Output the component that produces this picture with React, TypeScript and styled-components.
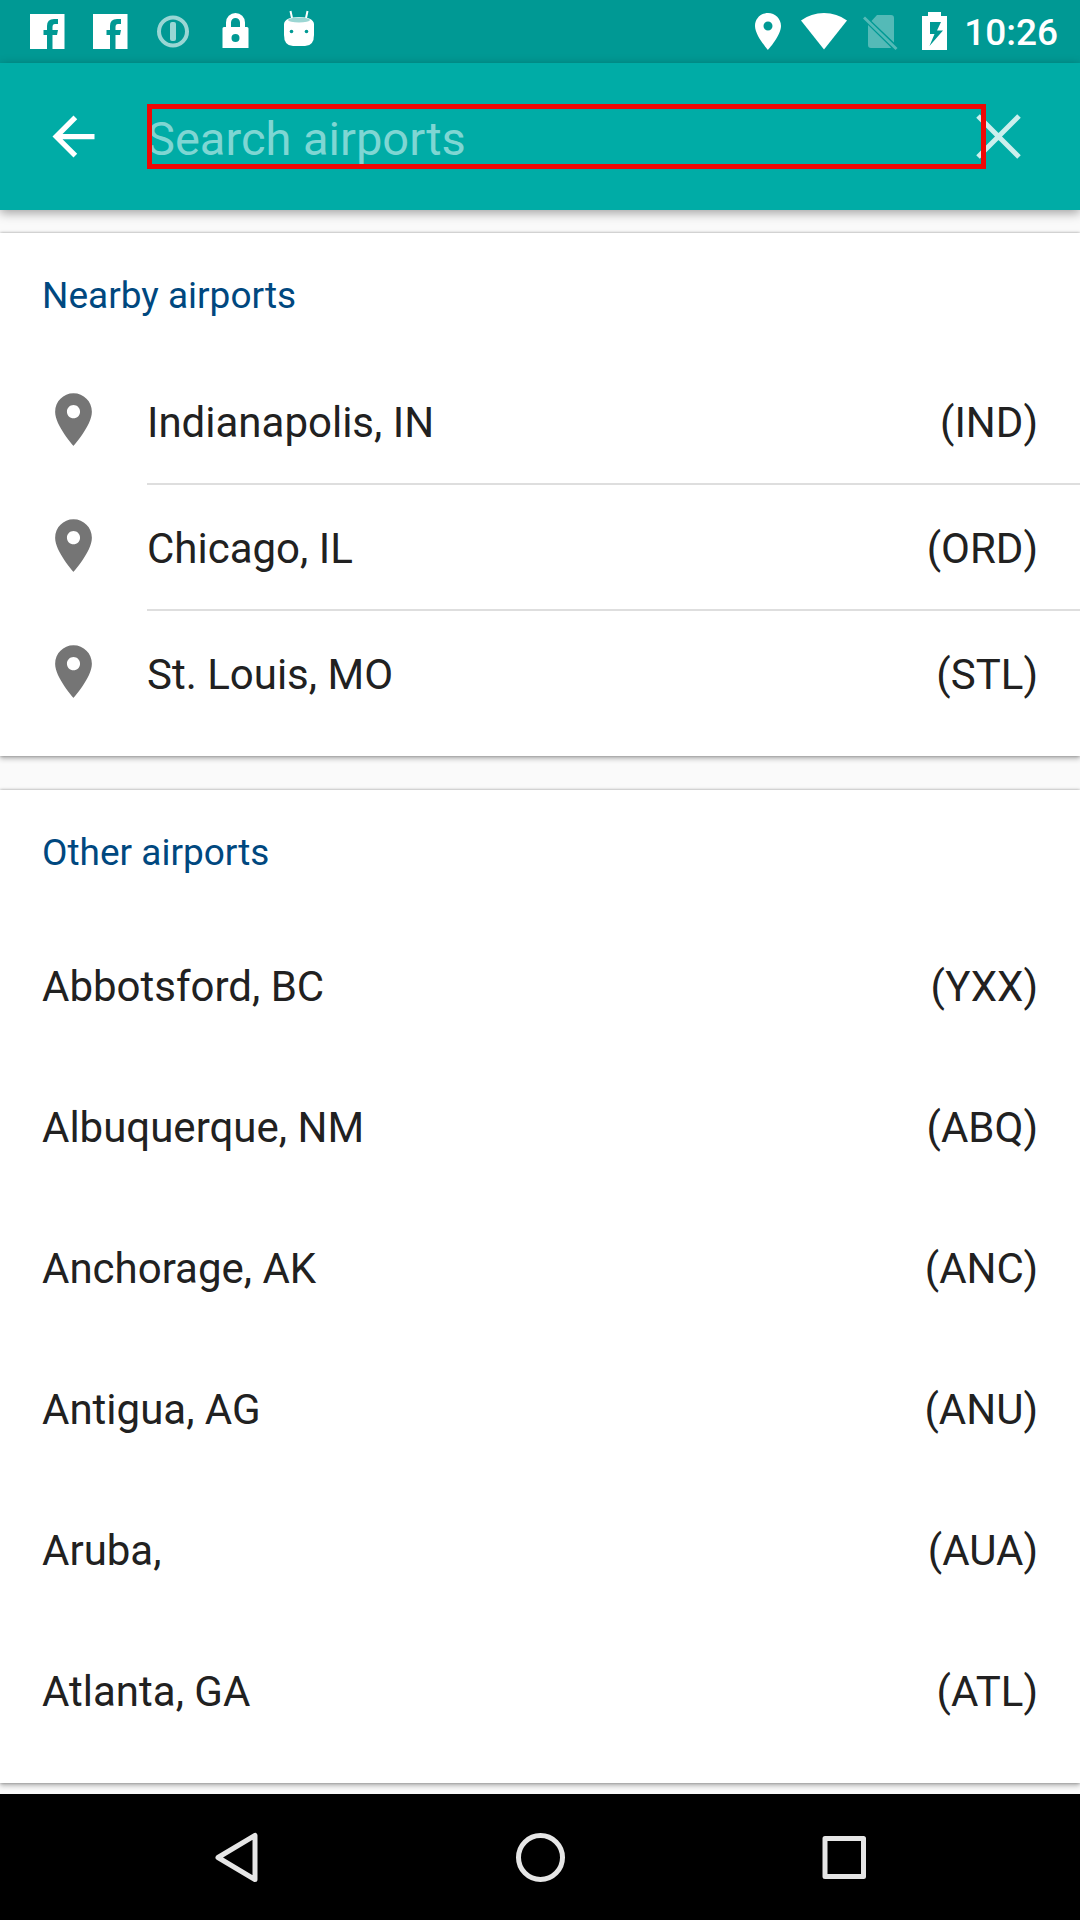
import React from "react";
import styled, { createGlobalStyle } from "styled-components";

const GlobalStyle = createGlobalStyle`
  * { box-sizing: border-box; }
  body { margin: 0; background: #fafafa; }
  body, button, input { font-family: Roboto, "Noto Sans", sans-serif; }
`;

const Screen = styled.div`
  display: flex;
  flex-direction: column;
  min-height: 100vh;
  color: #212121;
`;

const StatusBar = styled.div`
  display: flex;
  align-items: center;
  justify-content: space-between;
  height: 63px;
  padding: 0 22px 0 26px;
  background: #009994;
`;

const StatusGroup = styled.div<{ $gap: number }>`
  display: flex;
  align-items: center;
  gap: ${(p) => p.$gap}px;
`;

const StatusIcon = styled.svg`
  display: block;
  width: 42px;
  height: 63px;
  fill: #fff;
`;

const Clock = styled.time`
  margin-left: -7px;
  padding-top: 3px;
  color: #fff;
  font-size: 37px;
  font-weight: 500;
  line-height: 44px;
`;

const Toolbar = styled.header`
  position: relative;
  z-index: 1;
  display: flex;
  align-items: center;
  height: 147px;
  padding: 0 50px 0 42px;
  background: #00aca6;
  box-shadow: 0 3px 10px rgba(0, 0, 0, 0.36);
`;

const IconButton = styled.button`
  flex: none;
  display: block;
  padding: 0;
  border: 0;
  background: none;
  cursor: pointer;
`;

const CloseButton = styled(IconButton)`
  margin-left: -19px;
`;

const ActionIcon = styled.svg`
  display: block;
  width: 63px;
  height: 63px;
`;

const SearchInput = styled.input`
  position: relative;
  z-index: 1;
  flex: 1;
  min-width: 0;
  height: 65px;
  margin-left: 42px;
  padding: 3px 0 0;
  border: 0;
  outline: 5px solid #ee0805;
  outline-offset: -5px;
  background: none;
  color: #fff;
  font-size: 47px;
  &::placeholder {
    color: #7fd6d3;
    opacity: 1;
  }
`;

const Content = styled.main`
  flex: 1;
  display: flex;
  flex-direction: column;
  gap: 34px;
  padding: 23px 0 11px;
`;

const Card = styled.section<{ $bottom: number }>`
  padding-bottom: ${(p) => p.$bottom}px;
  background: #fff;
  box-shadow: 0 3px 5px rgba(0, 0, 0, 0.24), 0 0 3px rgba(0, 0, 0, 0.36);
`;

const CardTitle = styled.h2`
  margin: 0;
  padding: 0 42px;
  color: #00487f;
  font-size: 37px;
  font-weight: 400;
  line-height: 126px;
`;

const List = styled.ul`
  margin: 0;
  padding: 0;
  list-style: none;
`;

const Row = styled.li<{ $height: number }>`
  display: flex;
  align-items: center;
  height: ${(p) => p.$height}px;
  padding-left: 42px;
`;

const RowBody = styled.div<{ $divided?: boolean; $top?: number }>`
  flex: 1;
  align-self: stretch;
  display: flex;
  align-items: center;
  justify-content: space-between;
  padding: ${(p) => p.$top ?? 0}px 42px 0 0;
  box-shadow: ${(p) => (p.$divided ? "inset 0 -2px #dedede" : "none")};
  font-size: 42px;
  line-height: 50px;
`;

const PinIcon = styled.svg`
  flex: none;
  width: 63px;
  height: 63px;
  margin: 0 42px 5px 0;
  fill: #757575;
`;

const NavBar = styled.nav`
  display: flex;
  align-items: center;
  justify-content: center;
  gap: 178px;
  height: 126px;
  background: #000;
`;

const NavIcon = styled.svg`
  display: block;
  width: 126px;
  height: 126px;
  fill: none;
  stroke: #e6e6e6;
  stroke-width: 5;
  stroke-linejoin: round;
`;

const PIN =
  "M12 2C8.13 2 5 5.13 5 9c0 5.25 7 13 7 13s7-7.75 7-13c0-3.87-3.13-7-7-7zm0 9.5c-1.38 0-2.5-1.12-2.5-2.5s1.12-2.5 2.5-2.5 2.5 1.12 2.5 2.5-1.12 2.5-2.5 2.5z";

const nearby = [
  { city: "Indianapolis, IN", code: "IND" },
  { city: "Chicago, IL", code: "ORD" },
  { city: "St. Louis, MO", code: "STL" },
];

const others = [
  { city: "Abbotsford, BC", code: "YXX" },
  { city: "Albuquerque, NM", code: "ABQ" },
  { city: "Anchorage, AK", code: "ANC" },
  { city: "Antigua, AG", code: "ANU" },
  { city: "Aruba,", code: "AUA" },
  { city: "Atlanta, GA", code: "ATL" },
];

function FacebookIcon() {
  return (
    <StatusIcon viewBox="0 0 42 63" aria-hidden="true">
      <path d="M4 14H38.500V49H26.500V35H31L32 30H26.500V27Q26.500 24 29 24H32V19H28Q21 19 21 26V30H17.500V35H21V49H4Z" />
    </StatusIcon>
  );
}

export default function App() {
  return (
    <Screen>
      <GlobalStyle />
      <StatusBar>
        <StatusGroup $gap={21}>
          <FacebookIcon />
          <FacebookIcon />
          <StatusIcon viewBox="0 0 42 63" opacity="0.6" aria-hidden="true">
            <circle cx="21" cy="31.5" r="14" fill="none" stroke="#fff" strokeWidth="4" />
            <rect x="18" y="22" width="6" height="19" rx="2" />
          </StatusIcon>
          <StatusIcon viewBox="0 0 42 63" aria-hidden="true">
            <path d="M13.500 29V22.500a7 7 0 0 1 14 0V29" fill="none" stroke="#fff" strokeWidth="5" />
            <path
              fillRule="evenodd"
              d="M9 27H32Q33.500 27 33.500 28.500V48H7.500V28.500Q7.500 27 9 27ZM20.500 34a4 4 0 1 0 0 8a4 4 0 1 0 0-8Z"
            />
          </StatusIcon>
          <StatusIcon viewBox="0 0 42 63" aria-hidden="true">
            <path d="M12.500 11L14 18M29.500 11L28 18" stroke="#fff" strokeWidth="2" />
            <path d="M6 24Q7 17 21 17T36 24V35Q36 46 27 46H15Q6 46 6 35Z" />
            <ellipse cx="21" cy="20" rx="11" ry="2.500" fill="#9bd6d3" />
            <circle cx="13.500" cy="31.500" r="1.800" fill="#009994" />
            <circle cx="28.500" cy="31.500" r="1.800" fill="#009994" />
          </StatusIcon>
        </StatusGroup>
        <StatusGroup $gap={14}>
          <StatusIcon viewBox="0 0 42 63" aria-hidden="true">
            <path
              fillRule="evenodd"
              d="M21 13C13.800 13 8 18.800 8 26C8 35.500 21 50 21 50S34 35.500 34 26C34 18.800 28.200 13 21 13ZM21 21.500a4.500 4.500 0 1 1 0 9a4.500 4.500 0 1 1 0-9Z"
            />
          </StatusIcon>
          <StatusIcon viewBox="0 0 42 63" overflow="visible" aria-hidden="true">
            <path d="M-2 20.500Q8 13 21 13T44 20.500L21 49.500Z" />
          </StatusIcon>
          <StatusIcon viewBox="0 0 42 63" fillOpacity="0.33" aria-hidden="true">
            <path d="M18 15H32Q35 15 35 18V42.500L12.500 21ZM9 25L32 47.500Q31.500 48 31 48H12Q9 48 9 45ZM6 16.500L38.500 48L36.500 50L4 18.500Z" />
          </StatusIcon>
          <StatusIcon viewBox="0 0 42 63" aria-hidden="true">
            <path
              fillRule="evenodd"
              d="M13 12H26V16H32V50H7V16H13ZM15 22V34H19.500L14.500 46L28 30.500H22L26 22Z"
            />
          </StatusIcon>
          <Clock>10:26</Clock>
        </StatusGroup>
      </StatusBar>

      <Toolbar>
        <IconButton type="button" aria-label="Back">
          <ActionIcon viewBox="0 0 24 24" fill="#fff">
            <path d="M20 11H7.830l5.590-5.590L12 4l-8 8 8 8 1.410-1.410L7.830 13H20v-2z" />
          </ActionIcon>
        </IconButton>
        <SearchInput type="text" placeholder="Search airports" aria-label="Search airports" />
        <CloseButton type="button" aria-label="Clear search">
          <ActionIcon viewBox="0 0 63 63" stroke="#ccefed" strokeWidth="5">
            <path d="M11 11L52 52M52 11L11 52" />
          </ActionIcon>
        </CloseButton>
      </Toolbar>

      <Content>
        <Card $bottom={19}>
          <CardTitle>Nearby airports</CardTitle>
          <List>
            {nearby.map((a, i) => (
              <Row key={a.code} $height={126}>
                <PinIcon viewBox="0 0 24 24" aria-hidden="true">
                  <path d={PIN} />
                </PinIcon>
                <RowBody $top={2} $divided={i < nearby.length - 1}>
                  <span>{a.city}</span>
                  <span>({a.code})</span>
                </RowBody>
              </Row>
            ))}
          </List>
        </Card>
        <Card $bottom={21}>
          <CardTitle>Other airports</CardTitle>
          <List>
            {others.map((a) => (
              <Row key={a.code} $height={141}>
                <RowBody>
                  <span>{a.city}</span>
                  <span>({a.code})</span>
                </RowBody>
              </Row>
            ))}
          </List>
        </Card>
      </Content>

      <NavBar>
        <IconButton type="button" aria-label="Back">
          <NavIcon viewBox="0 0 126 126">
            <path d="M45 63.500L82 41.500V85.500Z" />
          </NavIcon>
        </IconButton>
        <IconButton type="button" aria-label="Home">
          <NavIcon viewBox="0 0 126 126">
            <circle cx="63.500" cy="63.500" r="22" />
          </NavIcon>
        </IconButton>
        <IconButton type="button" aria-label="Recent apps">
          <NavIcon viewBox="0 0 126 126">
            <rect x="44" y="44.500" width="38.500" height="38" />
          </NavIcon>
        </IconButton>
      </NavBar>
    </Screen>
  );
}
